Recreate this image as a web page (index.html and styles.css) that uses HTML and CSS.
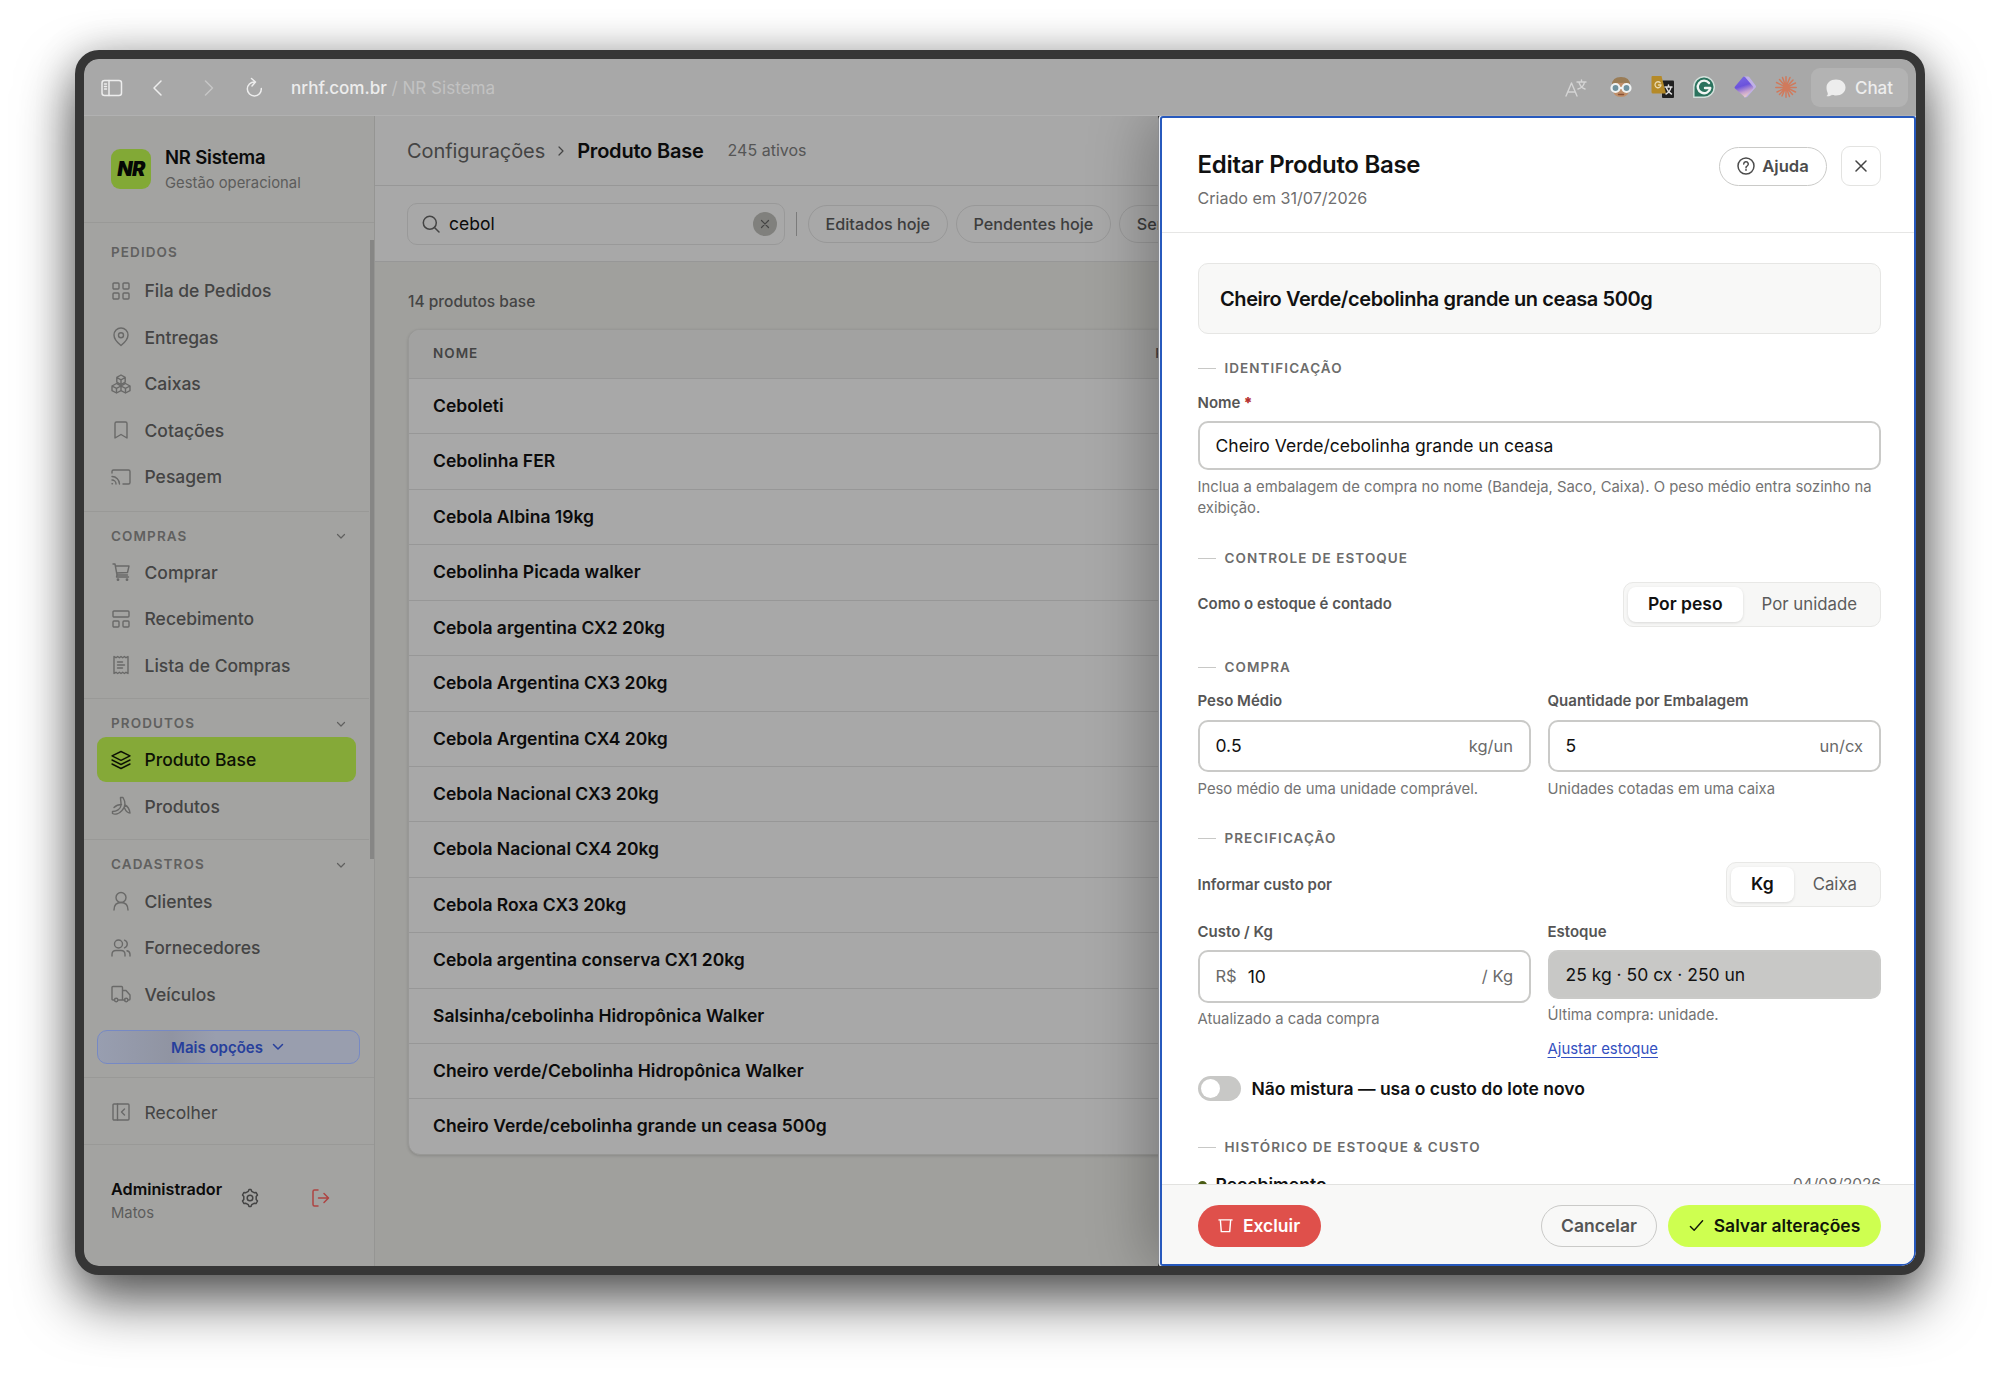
FILE: index.html
```html
<!DOCTYPE html>
<html lang="pt-BR">
<head>
    <meta charset="UTF-8">
    <meta name="viewport" content="width=device-width, initial-scale=1.0">
    <title>NR Sistema</title>
    <link rel="stylesheet" href="styles.css">
</head>
<body>

    <div class="window">

        <!-- Browser bar -->
        <div class="browser-bar">
            <div class="browser-nav">
                <svg class="panel" width="22" height="18" viewBox="0 0 22 18"><rect x="1" y="1.5" width="19.5" height="15" rx="2.5"/><path d="M8 1.5v15M3.5 5h2M3.5 7.500h2M3.5 10h2"/></svg>
                <svg width="22" height="22" viewBox="0 0 22 22"><path d="M14 4l-7 7 7 7"/></svg>
                <svg class="dim" width="22" height="22" viewBox="0 0 22 22"><path d="M7.500 4l7 7-7 7"/></svg>
                <svg class="reload" width="22" height="22" viewBox="0 0 22 22"><path d="M11.500 5a7 7 0 1 0 6.800 6.500M8.500 1.500l4 3.500-3.500 4"/></svg>
            </div>
            <div class="address">nrhf.com.br <span>/ NR Sistema</span></div>
            <div class="extensions">
                <svg width="22" height="22" viewBox="0 0 22 22"><g fill="none" stroke="#d4d4d4" stroke-width="1.400"><path d="M1 19L6.500 6 12 19M3 15h7M12 5h9M16.500 3v2M13 12c4-1 6-4 6.500-7M14 5.500c1 3 3 5.500 6 6.500"/></g></svg>
                <svg width="22" height="22" viewBox="0 0 22 22"><path d="M2 9q0-6 9-6t9 6v3q-1 9-9 9t-9-9z" fill="#c08f69"/><path d="M2 9q0-8 9-8t9 8q-4-3-9-2-5-1-9 2z" fill="#9a7c55"/><path d="M8 12h6" stroke="#f0f3f3" stroke-width="2"/><circle cx="5.500" cy="12" r="4" fill="#6f929f" stroke="#f0f3f3" stroke-width="2.200"/><circle cx="16.500" cy="12" r="4" fill="#6f929f" stroke="#f0f3f3" stroke-width="2.200"/><path d="M8.500 18.500h5" stroke="#8a5236" stroke-width="1.500" fill="none"/></svg>
                <svg width="23" height="22" viewBox="0 0 23 22"><rect x="11" y="4.500" width="12" height="17.500" rx="1" fill="#202020"/><path d="M1.500 0h9L15 17.500H2q-1.500 0-1.500-1.500V1q0-1 1-1z" fill="#b58a28"/><path d="M10 9H7.500M9.300 6.800a3 3 0 1 0 .7 2.200" stroke="#ead9ae" stroke-width="1.300" fill="none"/><path d="M14 11h7M17.500 9v2M15 18c3-1.500 4.500-4 5-7M15.500 12c1 3 3 5 5 6" stroke="#ddd" fill="none"/></svg>
                <svg width="22" height="22" viewBox="0 0 22 22"><path d="M11 .7A10.300 10.300 0 1 1 11 21.300H.8V11A10.300 10.300 0 0 1 11 .7z" fill="#2b735e" stroke="#d2dfda"/><path d="M16 7A6.300 6.300 0 1 0 17.300 12H12" fill="none" stroke="#f1f5f3" stroke-width="2.400"/></svg>
                <svg width="22" height="22" viewBox="0 0 22 22"><defs><linearGradient id="gem" x1="0.300" y1="0" x2="0.600" y2="1"><stop offset="0" stop-color="#7a68e4"/><stop offset=".45" stop-color="#6b52dc"/><stop offset=".75" stop-color="#c3a0cf"/><stop offset="1" stop-color="#eccfc6"/></linearGradient></defs><path d="M10 .5h4q1 0 1.600 1l6 8q.8 1 0 2l-8 9q-1 1-2 1H10z" fill="#bfb0e6"/><path d="M9 1q1-1 2 0l8 9.500q.8 1 0 2L12 20.500q-1 1-2 0L1 12.500q-1-1 0-2z" fill="url(#gem)"/></svg>
                <svg width="22" height="22" viewBox="0 0 22 22"><g stroke="#d07a5c" stroke-width="1.500" stroke-linecap="round"><path d="M11 .8v20.400M.8 11.500h20.400M4.500 3.500l13 15M18 4L4.500 18.500M7.500 1.500l7 19M15 1.500L7 20M1.500 6.500l19 9.500M2 16L20.500 7"/></g></svg>
                <div class="chat">
                    <svg width="20" height="18" viewBox="0 0 20 18"><path d="M10 .5c5.500 0 9.500 3.300 9.500 8s-4 8-9.500 8c-1.500 0-2.500-.2-4-.8-1.500 1.300-3.500 1.800-5.500 1.300 1.500-1 1.500-2 1-3.500C.8 12 .5 10 .5 8.500c0-4.700 4-8 9.500-8z" fill="#ededed"/></svg>
                    Chat
                </div>
            </div>
        </div>

        <div class="app">

            <!-- Sidebar -->
            <aside class="sidebar">
                <div class="brand">
                    <div class="logo">NR</div>
                    <div>
                        <div class="brand-name">NR Sistema</div>
                        <div class="brand-sub">Gestão operacional</div>
                    </div>
                </div>

                <nav class="menu">
                    <div class="group first">
                        <div class="group-title">PEDIDOS</div>
                        <a class="item"><svg class="icon" viewBox="0 0 20 20"><rect x="2" y="2" width="6" height="6" rx="1"/><rect x="12" y="2" width="6" height="6" rx="1"/><rect x="2" y="12" width="6" height="6" rx="1"/><rect x="12" y="12" width="6" height="6" rx="1"/></svg>Fila de Pedidos</a>
                        <a class="item"><svg class="icon" viewBox="0 0 20 20"><path d="M10 18.500S3 13 3 8a7 7 0 0 1 14 0c0 5-7 10.500-7 10.500z"/><circle cx="10" cy="8.300" r="2.500"/></svg>Entregas</a>
                        <a class="item"><svg class="icon" viewBox="0 0 20 20"><path d="M10 1l4.200 2.300v4.900L10 10.500 5.800 8.200V3.300zM5.500 9.500L10 12v4.700L5.500 19 1 16.700V12zM14.500 9.500L19 12v4.700L14.500 19 10 16.700V12zM5.800 3.500L10 5.800l4.200-2.300M10 5.800v4.500M1 12l4.500 2.400L10 12l4.500 2.400L19 12M5.500 14.400V19M14.500 14.400V19"/></svg>Caixas</a>
                        <a class="item"><svg class="icon" viewBox="0 0 20 20"><path d="M4 18V3.500Q4 2 5.500 2h9Q16 2 16 3.500V18l-6-3.500z"/></svg>Cotações</a>
                        <a class="item"><svg class="icon" viewBox="0 0 20 20"><path d="M1 6V4.500Q1 3 2.500 3h15Q19 3 19 4.500v11q0 1.500-1.500 1.500H12M1 9.500A7.500 7.500 0 0 1 8.500 17M1 13a4 4 0 0 1 4 4M1 16.700h.5"/></svg>Pesagem</a>
                    </div>

                    <div class="group buy">
                        <div class="group-title">COMPRAS <svg class="chevron" viewBox="0 0 10 10"><path d="M1.500 3.500L5 7l3.500-3.500"/></svg></div>
                        <a class="item"><svg class="icon" viewBox="0 0 20 20"><path d="M2 2h2l2 11h10.500M4.300 4H18l-1.500 6.500-11 .5M6 13l-.5 2h12"/><circle cx="7" cy="17.700" r=".7"/><circle cx="16" cy="17.700" r=".7"/></svg>Comprar</a>
                        <a class="item"><svg class="icon" viewBox="0 0 20 20"><rect x="2" y="2" width="16" height="6" rx="1"/><rect x="2" y="12" width="6" height="6" rx="1"/><rect x="12" y="12" width="6" height="6" rx="1"/></svg>Recebimento</a>
                        <a class="item"><svg class="icon" viewBox="0 0 20 20"><path d="M3 1.500l2 1.200 1.700-1.200 1.700 1.200L10 1.500l1.700 1.200 1.700-1.200L15 2.700l2-1.200v17l-2-1.200-1.600 1.200-1.700-1.200L10 18.500l-1.600-1.200-1.700 1.200L5 17.300l-2 1.200zM6.500 7h5M6.500 10h7M6.500 13h5"/></svg>Lista de Compras</a>
                    </div>

                    <div class="group">
                        <div class="group-title">PRODUTOS <svg class="chevron" viewBox="0 0 10 10"><path d="M1.500 3.500L5 7l3.500-3.500"/></svg></div>
                        <a class="item active"><svg class="icon" viewBox="0 0 20 20"><path d="M10 1.500l9 4.300-9 4.500-9-4.500zM1 10l9 4.500 9-4.500M1 14l9 4.500 9-4.500"/></svg>Produto Base</a>
                        <a class="item"><svg class="icon" viewBox="0 0 20 20"><path d="M9.500 1.500h2.500c3 5 2.500 9.500-1 13C8 17.800 4 19 1.500 17.500v-2c4 0 8-2.500 8.500-6 .3-3-.5-5-.5-8zM3 11.500c2-2 4.500-3 7.500-3M14 9c3 1.500 4.500 4.500 5 8-2 0-4-1.500-5.500-5"/></svg>Produtos</a>
                    </div>

                    <div class="group last">
                        <div class="group-title">CADASTROS <svg class="chevron" viewBox="0 0 10 10"><path d="M1.500 3.500L5 7l3.500-3.500"/></svg></div>
                        <a class="item"><svg class="icon" viewBox="0 0 20 20"><circle cx="10" cy="6.500" r="5"/><path d="M3 19c0-5 3-7.500 7-7.500s7 2.500 7 7.500"/></svg>Clientes</a>
                        <a class="item"><svg class="icon" viewBox="0 0 20 20"><circle cx="7.500" cy="6" r="4"/><path d="M1 18v-1.500c0-2.500 1.500-4 4-4h5c2.500 0 4 1.500 4 4V18M13.500 2.200a4 4 0 0 1 0 7.600M16 12.800c2 .5 3 2 3 3.700V18"/></svg>Fornecedores</a>
                        <a class="item"><svg class="icon" viewBox="0 0 20 20"><path d="M3 16H2q-1 0-1-1V3.500Q1 2.500 2 2.500h8.500q1 0 1 1V16H7.500M11.500 6.500H15l4 4.500v4q0 1-1 1h-1M14 16h-2.500"/><circle cx="5.200" cy="16" r="1.700"/><circle cx="15.200" cy="16" r="1.700"/></svg>Veículos</a>
                    </div>
                    <div class="scroll-thumb"></div>
                </nav>

                <div class="more">
                    <button class="more-btn">Mais opções <svg viewBox="0 0 12 12"><path d="M1.500 3.500L6 8l4.500-4.500"/></svg></button>
                </div>
                <div class="collapse"><svg class="icon" viewBox="0 0 20 20"><rect x="2" y="2" width="16" height="16" rx="1"/><path d="M6.500 2v16M13.500 7l-3 3 3 3"/></svg>Recolher</div>
                <div class="user">
                    <div class="user-info">
                        <div class="user-name">Administrador</div>
                        <div class="user-sub">Matos</div>
                    </div>
                    <svg class="gear" viewBox="0 0 20 20"><path d="M8.300 3.300L9 1.500h2l.7 1.800 2.400 1.400 1.900-.3 1.500 2.600-1.300 1.500v3l1.300 1.500-1.500 2.600-1.900-.3-2.400 1.400-.7 1.800H9l-.7-1.800-2.400-1.400-1.900.3L2.500 13l1.300-1.500v-3L2.500 7 4 4.400l1.900.3z"/><circle cx="10" cy="10" r="2.800"/></svg>
                    <svg class="logout" viewBox="0 0 20 20"><path d="M8 2H4.500Q3 2 3 3.500v13Q3 18 4.500 18H8M8.500 10H18M14 5.500l4.500 4.500-4.500 4.500"/></svg>
                </div>
            </aside>

            <!-- Product list -->
            <main class="main">
                <header class="page-head">
                    <span class="crumb">Configurações</span>
                    <svg class="crumb-sep" viewBox="0 0 10 10"><path d="M3 1l4 4-4 4"/></svg>
                    <span class="crumb-current">Produto Base</span>
                    <span class="count">245 ativos</span>
                </header>
                <div class="filters">
                    <div class="search">
                        <svg class="search-icon" viewBox="0 0 18 18"><circle cx="7.800" cy="7.800" r="6.500"/><path d="M12.500 12.500l4.500 4.500"/></svg>
                        <span>cebol</span>
                        <div class="clear"><svg viewBox="0 0 10 10"><path d="M1.500 1.500l7 7M8.500 1.500l-7 7"/></svg></div>
                    </div>
                    <div class="divider"></div>
                    <div class="pill">Editados hoje</div>
                    <div class="pill">Pendentes hoje</div>
                    <div class="pill">Sem preço</div>
                </div>
                <div class="content">
                    <div class="total">14 produtos base</div>
                    <div class="table">
                        <div class="table-head"><span>NOME</span><span class="col-2">PESO</span></div>
                        <div class="row">Ceboleti</div>
                        <div class="row">Cebolinha FER</div>
                        <div class="row">Cebola Albina 19kg</div>
                        <div class="row">Cebolinha Picada walker</div>
                        <div class="row">Cebola argentina CX2 20kg</div>
                        <div class="row">Cebola Argentina CX3 20kg</div>
                        <div class="row">Cebola Argentina CX4 20kg</div>
                        <div class="row">Cebola Nacional CX3 20kg</div>
                        <div class="row">Cebola Nacional CX4 20kg</div>
                        <div class="row">Cebola Roxa CX3 20kg</div>
                        <div class="row">Cebola argentina conserva CX1 20kg</div>
                        <div class="row">Salsinha/cebolinha Hidropônica Walker</div>
                        <div class="row">Cheiro verde/Cebolinha Hidropônica Walker</div>
                        <div class="row">Cheiro Verde/cebolinha grande un ceasa 500g</div>
                    </div>
                </div>
            </main>

            <!-- Edit drawer -->
            <section class="drawer">
                <header class="drawer-head">
                    <div>
                        <h2>Editar Produto Base</h2>
                        <p>Criado em 31/07/2026</p>
                    </div>
                    <div class="drawer-actions">
                        <button class="help"><svg viewBox="0 0 18 18"><circle cx="9" cy="9" r="8"/><path d="M6.700 7a2.300 2.300 0 1 1 3.300 2.200c-.7.300-1 .7-1 1.500M9 12.600v.7"/></svg>Ajuda</button>
                        <button class="close"><svg viewBox="0 0 12 12"><path d="M1 1l10 10M11 1L1 11"/></svg></button>
                    </div>
                </header>

                <div class="drawer-body">
                    <div class="product-name">Cheiro Verde/cebolinha grande un ceasa 500g</div>

                    <h3 class="t-ident">IDENTIFICAÇÃO</h3>
                    <label class="l-name">Nome<b>*</b></label>
                    <div class="field f-name">Cheiro Verde/cebolinha grande un ceasa</div>
                    <p class="hint">Inclua a embalagem de compra no nome (Bandeja, Saco, Caixa). O peso médio entra sozinho na exibição.</p>

                    <h3 class="t-stock">CONTROLE DE ESTOQUE</h3>
                    <div class="option">
                        <label>Como o estoque é contado</label>
                        <div class="segment"><span class="on">Por peso</span><span>Por unidade</span></div>
                    </div>

                    <h3 class="t-buy">COMPRA</h3>
                    <div class="columns">
                        <div>
                            <label>Peso Médio</label>
                            <div class="field">0.5<em>kg/un</em></div>
                            <p class="hint">Peso médio de uma unidade comprável.</p>
                        </div>
                        <div>
                            <label>Quantidade por Embalagem</label>
                            <div class="field">5<em>un/cx</em></div>
                            <p class="hint">Unidades cotadas em uma caixa</p>
                        </div>
                    </div>

                    <h3 class="t-price">PRECIFICAÇÃO</h3>
                    <div class="option">
                        <label>Informar custo por</label>
                        <div class="segment"><span class="on">Kg</span><span>Caixa</span></div>
                    </div>
                    <div class="columns">
                        <div>
                            <label>Custo / Kg</label>
                            <div class="field"><i>R$</i>10<em>/ Kg</em></div>
                            <p class="hint">Atualizado a cada compra</p>
                        </div>
                        <div>
                            <label>Estoque</label>
                            <div class="field locked">25 kg · 50 cx · 250 un</div>
                            <p class="hint">Última compra: unidade.</p>
                            <a class="link">Ajustar estoque</a>
                        </div>
                    </div>

                    <div class="toggle-row">
                        <div class="toggle"></div>
                        Não mistura — usa o custo do lote novo
                    </div>

                    <h3 class="t-history">HISTÓRICO DE ESTOQUE &amp; CUSTO</h3>
                    <div class="event"><strong>Recebimento</strong><time>04/08/2026</time></div>
                </div>

                <footer class="drawer-foot">
                    <button class="delete"><svg viewBox="0 0 16 16"><path d="M1 2h14M2.500 2l1 12.500h9l1-12.500"/></svg>Excluir</button>
                    <button class="cancel">Cancelar</button>
                    <button class="save"><svg viewBox="0 0 16 16"><path d="M1.500 9l4 4 9-10"/></svg>Salvar alterações</button>
                </footer>
            </section>
        </div>
    </div>

</body>
</html>
```

FILE: styles.css
```css
* {
    box-sizing: border-box;
}

body {
    margin: 0;
    padding: 50px 75px 0;
    height: 1374px;
    overflow: hidden;
    background-color: #fff;
    font-family: Inter, sans-serif;
    font-size: 17.5px;
}

svg {
    fill: none;
    stroke: currentColor;
    stroke-width: 1.5;
    stroke-linecap: round;
    stroke-linejoin: round;
    flex: none;
}

h2, h3, p {
    margin: 0;
}

button {
    font-family: inherit;
    display: flex;
    align-items: center;
    justify-content: center;
}

.window {
    width: 1850px;
    height: 1225px;
    border: 9px solid #363636;
    border-radius: 24px;
    overflow: hidden;
    background-color: #363636;
    box-shadow: 0 26px 56px rgba(0, 0, 0, 0.64), 0 2px 40px rgba(0, 0, 0, 0.2);
}

/* Browser bar */
.browser-bar {
    height: 57px;
    display: flex;
    align-items: center;
    background-color: #a8a8a8;
    border-bottom: 1px solid #b1b1b1;
    border-radius: 14px 14px 0 0;
    color: #ededed;
    padding: 1px 8px 0 17px;
}

.browser-nav {
    display: flex;
    align-items: center;
    gap: 24px;
}

.browser-nav .dim {
    color: #c6c6c6;
    margin-left: 5px;
}

.browser-nav .reload {
    margin-left: -1px;
}

.address {
    margin-left: 26px;
    font-size: 17.1px;
    font-weight: 500;
}

.address span {
    color: #c2c2c2;
    font-weight: 400;
}

.extensions {
    margin-left: auto;
    display: flex;
    align-items: center;
    gap: 19px;
}

.extensions > svg {
    stroke: none;
    margin-top: -2px;
}

.extensions > svg:first-child {
    margin-right: 4px;
    margin-top: 0;
}

.chat {
    width: 97px;
    height: 39px;
    margin-left: -5px;
    border-radius: 9px;
    background-color: #b3b3b3;
    display: flex;
    align-items: center;
    justify-content: center;
    gap: 9px;
    font-size: 17px;
    font-weight: 500;
}

.chat svg {
    stroke: none;
}

.app {
    height: 1150px;
    display: flex;
    position: relative;
    border-radius: 0 0 14px 14px;
    overflow: hidden;
}

/* Sidebar */
.sidebar {
    width: 291px;
    flex: none;
    background-color: #a3a3a1;
    border-right: 1px solid #959593;
    display: flex;
    flex-direction: column;
    color: #444;
}

.brand {
    height: 107px;
    padding: 0 27px;
    display: flex;
    align-items: center;
    gap: 14px;
    border-bottom: 1px solid #999997;
}

.logo {
    width: 40px;
    height: 40px;
    border-radius: 9px;
    background-color: #82a936;
    color: #050805;
    font-size: 20px;
    font-weight: 900;
    font-style: italic;
    letter-spacing: -0.5px;
    line-height: 40px;
    text-align: center;
}

.brand-name {
    margin-top: 3px;
    color: #0b0b0b;
    font-size: 18.5px;
    font-weight: 600;
    letter-spacing: -0.2px;
    line-height: 25px;
}

.brand-sub {
    font-size: 14.8px;
    line-height: 26px;
    color: #5c5c5b;
}

.menu {
    height: 801px;
    position: relative;
}

.group {
    margin-right: 5px;
    padding: 0 13px 10px;
    border-bottom: 1px solid #999997;
}

.group.first {
    height: 289px;
}

.group.last {
    border-bottom: 0;
}

.group-title {
    height: 38.5px;
    padding: 25px 10px 13px 14px;
    display: flex;
    align-items: center;
    justify-content: space-between;
    font-size: 13.5px;
    line-height: 1;
    font-weight: 600;
    letter-spacing: 1.1px;
    color: #60605f;
}

.group.first .group-title {
    height: 45px;
    padding-top: 29px;
    padding-bottom: 15px;
}

.group.buy .group-title {
    height: 37.5px;
    padding-top: 24px;
}

.group.last .group-title {
    height: 39px;
    padding-top: 25px;
}

.chevron {
    width: 10px;
    height: 10px;
    stroke-width: 1.2;
}

.item {
    height: 45px;
    margin-bottom: 1.5px;
    padding-left: 14px;
    display: flex;
    align-items: center;
    gap: 13.5px;
    border-radius: 9px;
    font-weight: 500;
}

.item:last-child {
    margin-bottom: 0;
}

.icon {
    width: 20px;
    height: 20px;
    color: #696968;
    stroke-width: 1.4;
}

.item.active {
    background-color: #85a938;
    color: #0c1105;
}

.item.active .icon {
    color: #0c1105;
}

.scroll-thumb {
    position: absolute;
    top: 17px;
    right: 0;
    width: 4px;
    height: 619px;
    background-color: #868685;
}

.more {
    height: 54px;
    padding: 6px 13px 0;
    border-bottom: 1px solid #999997;
}

.more-btn {
    width: 263px;
    height: 34px;
    gap: 9px;
    padding: 0 8px 0 6px;
    border: 1.5px solid #7689c4;
    border-radius: 10px;
    background: linear-gradient(90deg, #989eb0, #9094a2 28%, #999eae 45%);
    color: #273f9c;
    font-size: 15px;
    font-weight: 600;
}

.more-btn svg {
    width: 12px;
    height: 12px;
}

.collapse {
    height: 67px;
    padding: 2px 0 0 27px;
    display: flex;
    align-items: center;
    gap: 13.5px;
    border-bottom: 1px solid #999997;
}

.user {
    padding: 33px 27px 0;
    display: flex;
    align-items: flex-start;
}

.user-info {
    width: 129px;
}

.user-name {
    color: #0b0b0b;
    font-size: 16.2px;
    font-weight: 600;
    line-height: 23px;
}

.user-sub {
    font-size: 14.8px;
    line-height: 25px;
    color: #5c5c5b;
}

.gear {
    width: 20px;
    height: 20px;
    margin-top: 10px;
}

.logout {
    width: 20px;
    height: 20px;
    margin: 10px 0 0 50px;
    color: #ae4442;
}

/* Product list */
.main {
    width: 783px;
    flex: none;
    overflow: hidden;
    background-color: #a0a09d;
}

.page-head {
    height: 70px;
    padding-left: 32px;
    display: flex;
    align-items: center;
    background-color: #a8a8a8;
    border-bottom: 1px solid #979797;
    white-space: nowrap;
}

.crumb {
    font-size: 20px;
    letter-spacing: -0.08px;
    color: #444;
}

.crumb-sep {
    width: 10px;
    height: 10px;
    margin: 0 11px 0 11px;
    color: #444;
    stroke-width: 1.2;
}

.crumb-current {
    font-size: 20px;
    font-weight: 600;
    letter-spacing: -0.2px;
    color: #0b0b0b;
}

.count {
    margin: -2px 0 0 24px;
    font-size: 16px;
    color: #555;
}

.filters {
    height: 76px;
    padding-left: 32px;
    display: flex;
    align-items: center;
    background-color: #a8a8a8;
    border-bottom: 1px solid #979797;
}

.search {
    width: 378px;
    height: 42px;
    flex: none;
    padding: 0 7px 0 14px;
    display: flex;
    align-items: center;
    gap: 9px;
    border: 1px solid #999;
    border-radius: 10px;
    color: #0b0b0b;
}

.search-icon {
    width: 18px;
    height: 18px;
    color: #444;
}

.clear {
    width: 24px;
    height: 24px;
    margin-left: auto;
    border-radius: 50%;
    background-color: #80807d;
    display: flex;
    align-items: center;
    justify-content: center;
    color: #444;
}

.clear svg {
    width: 10px;
    height: 10px;
    stroke-width: 1.2;
}

.divider {
    width: 1px;
    height: 24px;
    margin: 0 11px 0 11px;
    background-color: #7b7b7b;
    flex: none;
}

.pill {
    height: 38px;
    padding: 0 16.5px;
    margin-right: 8.5px;
    flex: none;
    border: 1px solid #989898;
    border-radius: 19px;
    line-height: 36px;
    font-size: 16.2px;
    font-weight: 500;
    color: #3d3d3d;
}

.content {
    padding: 29px 0 0 33px;
}

.total {
    font-size: 15.5px;
    line-height: 22px;
    font-weight: 500;
    color: #444;
}

.table {
    width: 900px;
    margin-top: 16px;
    border: 1px solid #989896;
    border-radius: 12px;
    overflow: hidden;
    background-color: #a8a8a8;
    box-shadow: 0 1px 3px rgba(0, 0, 0, 0.15);
}

.table-head {
    height: 48px;
    padding: 0 0 2px 24px;
    display: flex;
    align-items: center;
    background-color: #a2a2a1;
    font-size: 13.5px;
    font-weight: 600;
    letter-spacing: 1px;
    color: #444;
}

.col-2 {
    margin-left: 677px;
}

.row {
    height: 55.43px;
    padding-left: 24px;
    border-top: 1px solid #979797;
    line-height: 54px;
    font-weight: 600;
    color: #0b0b0b;
}

/* Drawer */
.drawer {
    position: absolute;
    top: 0;
    right: 0;
    width: 756px;
    height: 1150px;
    display: flex;
    flex-direction: column;
    border: 2px solid #2759bd;
    border-radius: 3px 3px 14px 3px;
    background-color: #fff;
    overflow: hidden;
    box-shadow: 0 0 0 1.5px #e4e8f0, -12px 0 60px rgba(0, 0, 0, 0.28);
}

.drawer-head {
    height: 115px;
    flex: none;
    padding: 28px 33px 0 35.5px;
    display: flex;
    justify-content: space-between;
    border-bottom: 1px solid #e6e6e5;
}

.drawer-head h2 {
    font-size: 24px;
    line-height: 37px;
    font-weight: 600;
    letter-spacing: -0.3px;
    color: #111;
}

.drawer-head p {
    font-size: 16.1px;
    line-height: 24px;
    margin-top: 3px;
    color: #6e6e6e;
}

.drawer-actions {
    display: flex;
    gap: 14px;
}

.help {
    width: 108px;
    height: 39px;
    margin-top: 1px;
    gap: 7px;
    padding: 0 4px 1px 4px;
    border: 1.5px solid #cacac8;
    border-radius: 20px;
    background-color: #fff;
    font-size: 16.6px;
    font-weight: 600;
    color: #4c4c4c;
}

.help svg {
    width: 18px;
    height: 18px;
}

.close {
    width: 40px;
    height: 40px;
    padding: 0;
    border: 1px solid #e3e3e1;
    border-radius: 9px;
    background-color: #fff;
    color: #444;
}

.close svg {
    width: 12px;
    height: 12px;
}

.drawer-body {
    flex: 1;
    min-height: 0;
    overflow: hidden;
    padding: 30px 33px 0 35.5px;
    color: #111;
}

.product-name {
    height: 70.5px;
    padding-left: 21.5px;
    border: 1px solid #e6e6e4;
    border-radius: 10px;
    background-color: #f8f8f7;
    line-height: 70px;
    font-size: 20px;
    font-weight: 600;
    letter-spacing: -0.41px;
}

h3 {
    display: flex;
    align-items: center;
    gap: 9px;
    font-size: 13.5px;
    line-height: 21px;
    height: 20px;
    font-weight: 600;
    letter-spacing: 1.05px;
    color: #6c6c6b;
}

h3::before {
    content: "";
    width: 18px;
    height: 1px;
    background-color: #c8c8c6;
}

.t-ident {
    margin-top: 24.5px;
}

.t-stock {
    margin: 29.5px 0 13.5px;
}

.t-buy {
    margin: 30.5px 0 14px;
}

.t-price {
    margin: 28.5px 0 14px;
}

.t-history {
    margin: 37px 0 15.5px;
}

label {
    display: block;
    font-size: 15px;
    line-height: 20px;
    font-weight: 600;
    color: #555;
}

.l-name {
    margin-top: 15px;
}

label b {
    margin-left: 3px;
    color: #b52f2f;
}

.field {
    height: 52.5px;
    margin-top: 8.5px;
    padding: 0 16px;
    display: flex;
    align-items: center;
    border: 2px solid #cacac8;
    border-radius: 10px;
}

.f-name {
    height: 49px;
    margin-top: 8px;
}

.field em {
    margin-left: auto;
    font-style: normal;
    font-size: 16.5px;
    color: #6a6a6a;
}

.field i {
    margin-right: 11px;
    font-style: normal;
    font-size: 16.5px;
    color: #6a6a6a;
}

.field.locked {
    height: 48.5px;
    background-color: #c8c8c6;
}

.hint {
    margin-top: 6.5px;
    font-size: 14.83px;
    line-height: 21px;
    color: #737373;
}

.option {
    height: 45px;
    display: flex;
    align-items: center;
    justify-content: space-between;
}

.segment {
    height: 45px;
    padding: 4px;
    display: flex;
    border: 1.5px solid #e8e8e6;
    border-radius: 10px;
    background-color: #f7f7f6;
}

.segment span {
    padding: 0 19px;
    line-height: 34px;
    font-size: 16.8px;
    color: #5c5c5c;
}

.segment .on {
    padding: 0 20px;
    border-radius: 8px;
    background-color: #fff;
    box-shadow: 0 1px 3px rgba(0, 0, 0, 0.12);
    font-size: 17.5px;
    font-weight: 600;
    color: #111;
}

.columns {
    display: grid;
    grid-template-columns: 1fr 1fr;
    gap: 16.5px;
}

.option + .columns {
    margin-top: 14.5px;
}

.link {
    display: inline-block;
    margin-top: 12.5px;
    font-size: 14.9px;
    line-height: 20px;
    color: #3350c0;
    text-decoration: underline;
    text-underline-offset: 3px;
}

.toggle-row {
    height: 25px;
    margin-top: 17px;
    display: flex;
    align-items: center;
    gap: 11px;
    font-weight: 600;
}

.toggle {
    width: 43px;
    height: 25px;
    padding: 3px;
    border-radius: 13px;
    background-color: #c8c8c6;
}

.toggle::before {
    content: "";
    display: block;
    width: 19px;
    height: 19px;
    border-radius: 50%;
    background-color: #fff;
}

.event {
    display: flex;
    align-items: center;
    line-height: 24px;
}

.event::before {
    content: "";
    width: 9px;
    height: 9px;
    margin-right: 9px;
    border-radius: 50%;
    background-color: #4a5c14;
}

.event strong {
    font-weight: 600;
}

.event time {
    margin-left: auto;
    font-size: 15.4px;
    color: #6a6a6a;
}

.drawer-foot {
    height: 80px;
    flex: none;
    padding: 19.5px 33px 0 35.5px;
    display: flex;
    gap: 11px;
    border-top: 1px solid #e2e2e0;
    background-color: #f8f8f7;
}

.drawer-foot button {
    height: 42px;
    padding: 0;
    gap: 10px;
    border: 0;
    border-radius: 21px;
    font-size: 17.5px;
    font-weight: 600;
}

.drawer-foot svg {
    width: 15px;
    height: 15px;
}

.drawer-foot .delete {
    width: 123px;
    margin-right: auto;
    background-color: #df504b;
    color: #fff;
}

.drawer-foot .cancel {
    width: 116px;
    border: 1.5px solid #cacac8;
    background-color: transparent;
    color: #555;
}

.drawer-foot .save {
    width: 213px;
    background-color: #ceff50;
    color: #10160a;
}
```
